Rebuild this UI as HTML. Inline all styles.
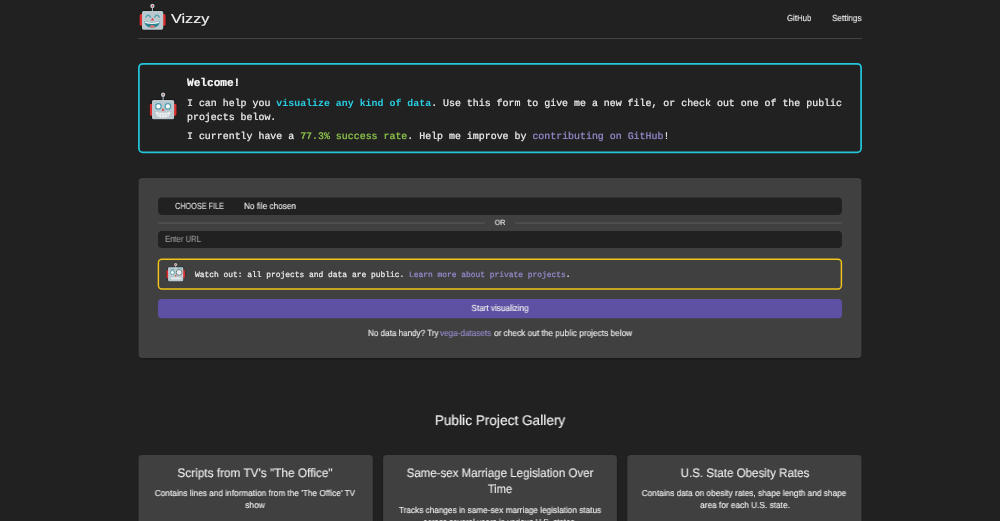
<!DOCTYPE html>
<html lang="en"><head><meta charset="utf-8"><title>Vizzy</title>
<style>
*{box-sizing:border-box;margin:0;padding:0}
html,body{width:1000px;height:521px;background:#212121;overflow:hidden}
body{font-family:"Liberation Sans", sans-serif;color:#eee;-webkit-font-smoothing:antialiased}
#app{position:relative;width:1000px;height:521px;overflow:hidden;background:#212121}
.t{position:absolute;white-space:pre;line-height:1;display:inline-block;will-change:transform;text-rendering:geometricPrecision}
.s{font-family:"Liberation Sans", sans-serif;-webkit-text-stroke:.12px}
.m{font-family:"Liberation Mono", monospace;-webkit-text-stroke:.22px}
.m b{-webkit-text-stroke:0}
.rb{position:absolute;overflow:visible}
.abs{position:absolute}
a{color:inherit;text-decoration:none}
header,nav,main,section,form,article,label,.brand,.row{display:contents}
button.t{background:none;border:0;padding:0;cursor:pointer}
#bg{position:absolute;left:0;top:0}
</style></head><body>
<div id="app">

<svg id="bg" width="1000" height="521" viewBox="0 0 1000 521">
<defs><filter id="sh" x="-5%" y="-5%" width="110%" height="120%"><feGaussianBlur stdDeviation="1"/></filter></defs>
<rect x="138" y="38" width="724" height=".85" fill="#4a4a4a"/>
<rect x="138.9" y="63.8" width="722.2" height="88.6" rx="3.9" fill="none" stroke="#26c6da" stroke-width="1.7"/>
<rect x="139" y="179.5" width="722" height="179.5" rx="3.5" fill="#000" opacity=".36" filter="url(#sh)"/>
<rect x="138.5" y="178" width="723" height="180" rx="3.5" fill="#404040"/>
<rect x="158.1" y="197.6" width="683.8" height="17.3" rx="3.8" fill="#212121"/>
<rect x="157.9" y="222.35" width="326.8" height="1.35" fill="#545454"/>
<rect x="515.1" y="222.35" width="326.9" height="1.35" fill="#545454"/>
<rect x="158.1" y="231" width="683.8" height="17" rx="3.8" fill="#212121"/>
<rect x="158.4" y="259.2" width="683" height="29.7" rx="3.4" fill="none" stroke="#f4c418" stroke-width="1.45"/>
<rect x="158" y="299" width="684" height="19.2" rx="3.8" fill="#5e50a3"/>
<rect x="139" y="456.5" width="233.3" height="80" rx="3.5" fill="#000" opacity=".36" filter="url(#sh)"/>
<rect x="383.6" y="456.5" width="232.8" height="80" rx="3.5" fill="#000" opacity=".36" filter="url(#sh)"/>
<rect x="627.8" y="456.5" width="233.2" height="80" rx="3.5" fill="#000" opacity=".36" filter="url(#sh)"/>
<rect x="138.5" y="455" width="234.3" height="80" rx="3.5" fill="#404040"/>
<rect x="383.1" y="455" width="233.8" height="80" rx="3.5" fill="#404040"/>
<rect x="627.3" y="455" width="234.2" height="80" rx="3.5" fill="#404040"/>
</svg>
<header><a class="brand">
<svg class="rb" style="left:136px;top:0;width:34px;height:34px" viewBox="136 0 34 34">
<defs><g id="r1s">
<rect x="139.6" y="14" width="4" height="11.8" rx="1.6" fill="#d83030"/>
<rect x="161.6" y="14" width="4" height="11.8" rx="1.6" fill="#d83030"/>
<rect x="151.9" y="7" width="1" height="5" fill="#b0bec5"/>
<circle cx="152.4" cy="5.9" r="2.2" fill="#b8c6cd"/>
<rect x="142" y="10.9" width="21.2" height="18.8" rx="1.6" fill="#bac8cf"/>
</g></defs>
<use href="#r1s" stroke="#151515" stroke-width="1.2"/><use href="#r1s"/>
<ellipse cx="152.4" cy="5.9" rx="0.6" ry="1" fill="#e53935"/>
<path d="M145.9 17.1 Q148.2 13.1 150.6 17.1" fill="none" stroke="#4fa0b0" stroke-width="1.25" stroke-linecap="round"/>
<path d="M154.6 17.1 Q157 13.1 159.3 17.1" fill="none" stroke="#4fa0b0" stroke-width="1.25" stroke-linecap="round"/>
<path d="M150.9 20.4 L152.4 17.7 L153.9 20.4 Z" fill="#e53935"/>
<path d="M144.2 21 Q152.2 23.6 160 21 Q159.4 27.7 152.1 27.7 Q144.9 27.7 144.2 21 Z" fill="#2b8290"/>
<path d="M144.5 21.2 Q152.2 23.8 159.7 21.2 Q159.5 22.3 159 23 Q152.2 25 145.2 23 Q144.7 22.3 144.5 21.2 Z" fill="#f3f6f7"/>
<path d="M149.2 27.1 Q152.2 23.6 155.3 27.1 Q152.2 28.1 149.2 27.1 Z" fill="#f4706a"/>
</svg>
<span id="t1" class="t s" style="left:171.20px;transform-origin:0 50%;top:11.00px;font-size:13.00px;color:#f4f4f4;font-weight:400;transform:scaleX(1.2456);line-height:15px;-webkit-text-stroke:.1px;">Vizzy</span>
</a><nav>
<a id="t2" class="t s" style="left:786.60px;transform-origin:0 50%;top:13.00px;font-size:8.80px;color:#eee;font-weight:400;transform:scaleX(0.8908);line-height:10px;">GitHub</a>
<a id="t3" class="t s" style="left:831.50px;transform-origin:0 50%;top:13.00px;font-size:8.80px;color:#eee;font-weight:400;transform:scaleX(0.9278);line-height:10px;">Settings</a>
</nav></header><main>
<section class="welcome">
<svg class="rb" style="left:146px;top:89px;width:34px;height:34px" viewBox="146 89 34 34">
<defs><g id="r2s">
<rect x="149.8" y="103.7" width="4" height="12.1" rx="1.6" fill="#d83030"/>
<rect x="172.5" y="103.7" width="4" height="12.1" rx="1.6" fill="#d83030"/>
<rect x="162.6" y="96" width="1" height="5" fill="#b0bec5"/>
<circle cx="163.1" cy="94.7" r="2.2" fill="#b8c6cd"/>
<rect x="152" y="99.9" width="22.1" height="19.4" rx="1.6" fill="#bac8cf"/>
</g></defs>
<use href="#r2s" stroke="#151515" stroke-width="1.2"/><use href="#r2s"/>
<path d="M162.2 94.1 L164 94.1 L163.1 95.6 Z" fill="#e53935"/>
<circle cx="158.4" cy="106.4" r="2.7" fill="#fff" stroke="#4fa0b0" stroke-width="1.2"/>
<circle cx="167.9" cy="106.4" r="2.7" fill="#fff" stroke="#4fa0b0" stroke-width="1.2"/>
<path d="M161.6 110.8 L163.05 107.9 L164.5 110.8 Z" fill="#e53935"/>
<path d="M155.6 111.9 Q163 113.6 170.5 111.9 Q170.3 117.4 163 117.4 Q155.8 117.4 155.6 111.9 Z" fill="#f2f4f5"/>
<path d="M156 114.5 Q163 115.9 170.1 114.5 M158.9 112.6 V116.9 M161.6 112.9 V117.3 M164.4 112.9 V117.3 M167.1 112.6 V116.9" stroke="#b9c3c8" stroke-width=".5" fill="none"/>
</svg>
<h2 id="t4" class="t m" style="left:187.30px;transform-origin:0 50%;top:78.00px;font-size:11.10px;color:#fafafa;font-weight:700;transform:scaleX(1.0000);line-height:13px;">Welcome!</h2>
<p id="t5" class="t m" style="left:187.00px;transform-origin:0 50%;top:98.00px;font-size:9.93px;color:#eee;font-weight:400;transform:scaleX(1.0000);line-height:12px;">I can help you <b style="color:#29cde2">visualize any kind of data</b>. Use this form to give me a new file, or check out one of the public</p>
<p id="t6" class="t m" style="left:187.00px;transform-origin:0 50%;top:112.00px;font-size:9.93px;color:#eee;font-weight:400;transform:scaleX(1.0000);line-height:12px;">projects below.</p>
<p id="t7" class="t m" style="left:187.00px;transform-origin:0 50%;top:131.00px;font-size:9.93px;color:#eee;font-weight:400;transform:scaleX(1.0000);line-height:12px;">I currently have a <span style="color:#8fc94c">77.3% success rate</span>. Help me improve by <a style="color:#968bce">contributing on GitHub</a>!</p>
</section>
<form onsubmit="return false"><label class="file">
<span id="t8" class="t s" style="left:175.40px;transform-origin:0 50%;top:201.00px;font-size:9.00px;color:#dcdcdc;font-weight:400;transform:scaleX(0.8081);line-height:11px;">CHOOSE FILE</span>
<span id="t9" class="t s" style="left:244.40px;transform-origin:0 50%;top:201.00px;font-size:9.00px;color:#eee;font-weight:400;transform:scaleX(0.9115);line-height:11px;">No file chosen</span>
</label>
<span id="t10" class="t s" style="left:500.00px;transform-origin:50% 50%;top:218.00px;font-size:7.60px;color:#eee;font-weight:400;transform:translateX(-50%) scaleX(0.9218);line-height:9px;">OR</span>
<label class="url">
<span id="t11" class="t s" style="left:165.40px;transform-origin:0 50%;top:234.00px;font-size:8.90px;color:#9a9a9e;font-weight:400;transform:scaleX(0.8688);line-height:10px;">Enter URL</span>
</label><div class="row">
<svg class="rb" style="left:162px;top:259px;width:28px;height:28px" viewBox="161.8 258.8 28 28">
<defs><g id="r3s">
<rect x="166.3" y="270" width="3" height="8" rx="1.2" fill="#e02b2b"/>
<rect x="181.8" y="270" width="3" height="8" rx="1.2" fill="#e02b2b"/>
<rect x="175.1" y="265" width=".8" height="3" fill="#b0bec5"/>
<circle cx="175.5" cy="264.3" r="1.6" fill="#b8c5cb"/>
<rect x="167.9" y="267" width="15.1" height="14" rx="1.3" fill="#bccbd1"/>
</g></defs>
<use href="#r3s" stroke="#2b2b31" stroke-width="1"/><use href="#r3s"/>
<circle cx="175.5" cy="264.3" r=".6" fill="#e53935"/>
<path d="M169.8 270 Q172 267.6 174.4 269.6" fill="none" stroke="#5aa5b2" stroke-width=".7"/>
<path d="M177.6 268 Q179.6 266.6 181.6 268.2" fill="none" stroke="#5aa5b2" stroke-width=".7"/>
<circle cx="172.2" cy="272.3" r="2" fill="#fff" stroke="#4f9aa8" stroke-width=".9"/>
<circle cx="178.9" cy="272.2" r="2.9" fill="#e6eef0" stroke="#6b7478" stroke-width=".9"/>
<circle cx="175.5" cy="275.6" r=".8" fill="#e53935"/>
<rect x="170.9" y="277.3" width="9.6" height="1.8" fill="#e4ecef"/>
</svg>
<p id="t12" class="t m" style="left:194.80px;transform-origin:0 50%;top:271.00px;font-size:7.93px;color:#eee;font-weight:400;transform:scaleX(1.0000);line-height:9px;">Watch out: all projects and data are public. <a style="color:#968bce">Learn more about private projects</a>.</p>
</div>
<button id="t13" class="t s" type="button" style="left:500.00px;transform-origin:50% 50%;top:303.00px;font-size:8.90px;color:#f0f0f0;font-weight:400;transform:translateX(-50%) scaleX(0.9203);line-height:10px;">Start visualizing</button>
<div class="row">
<span id="t14" class="t s" style="left:367.60px;transform-origin:0 50%;top:328.00px;font-size:8.90px;color:#eee;font-weight:400;transform:scaleX(0.9113);line-height:10px;">No data handy? Try</span>
<a id="t15" class="t s" style="left:440.20px;transform-origin:0 50%;top:328.00px;font-size:8.90px;color:#968bce;font-weight:400;transform:scaleX(0.9181);line-height:10px;">vega-datasets</a>
<span id="t16" class="t s" style="left:493.80px;transform-origin:0 50%;top:328.00px;font-size:8.90px;color:#eee;font-weight:400;transform:scaleX(0.9338);line-height:10px;">or check out the public projects below</span>
</div></form>
<section class="gallery">
<h2 id="t17" class="t s" style="left:500.20px;transform-origin:50% 50%;top:412.00px;font-size:14.00px;color:#f5f5f5;font-weight:400;transform:translateX(-50%) scaleX(0.9744);line-height:16px;">Public Project Gallery</h2>
<article>
<h3 id="t18" class="t s" style="left:255.20px;transform-origin:50% 50%;top:466.00px;font-size:12.30px;color:#eee;font-weight:400;transform:translateX(-50%) scaleX(0.9601);line-height:14px;">Scripts from TV's "The Office"</h3>
<p id="t19" class="t s" style="left:255.40px;transform-origin:50% 50%;top:488.00px;font-size:8.70px;color:#eee;font-weight:400;transform:translateX(-50%) scaleX(0.9541);line-height:10px;">Contains lines and information from the 'The Office' TV</p>
<p id="t20" class="t s" style="left:255.40px;transform-origin:50% 50%;top:500.00px;font-size:8.70px;color:#eee;font-weight:400;transform:translateX(-50%) scaleX(0.9615);line-height:10px;">show</p>
</article><article>
<h3 id="t21" class="t s" style="left:500.00px;transform-origin:50% 50%;top:466.00px;font-size:12.30px;color:#eee;font-weight:400;transform:translateX(-50%) scaleX(0.9355);line-height:14px;">Same-sex Marriage Legislation Over</h3>
<h3 id="t22" class="t s" style="left:499.80px;transform-origin:50% 50%;top:482.00px;font-size:12.30px;color:#eee;font-weight:400;transform:translateX(-50%) scaleX(0.9079);line-height:14px;">Time</h3>
<p id="t23" class="t s" style="left:500.10px;transform-origin:50% 50%;top:505.00px;font-size:8.70px;color:#eee;font-weight:400;transform:translateX(-50%) scaleX(0.9467);line-height:10px;">Tracks changes in same-sex marriage legislation status</p>
<p id="t24" class="t s" style="left:499.80px;transform-origin:50% 50%;top:517.00px;font-size:8.70px;color:#eee;font-weight:400;transform:translateX(-50%) scaleX(0.9215);line-height:10px;">across several years in various U.S. states.</p>
</article><article>
<h3 id="t25" class="t s" style="left:744.60px;transform-origin:50% 50%;top:466.00px;font-size:12.30px;color:#eee;font-weight:400;transform:translateX(-50%) scaleX(0.9415);line-height:14px;">U.S. State Obesity Rates</h3>
<p id="t26" class="t s" style="left:744.40px;transform-origin:50% 50%;top:488.00px;font-size:8.70px;color:#eee;font-weight:400;transform:translateX(-50%) scaleX(0.9519);line-height:10px;">Contains data on obesity rates, shape length and shape</p>
<p id="t27" class="t s" style="left:744.60px;transform-origin:50% 50%;top:500.00px;font-size:8.70px;color:#eee;font-weight:400;transform:translateX(-50%) scaleX(0.9525);line-height:10px;">area for each U.S. state.</p>
</article></section></main>
</div></body></html>
